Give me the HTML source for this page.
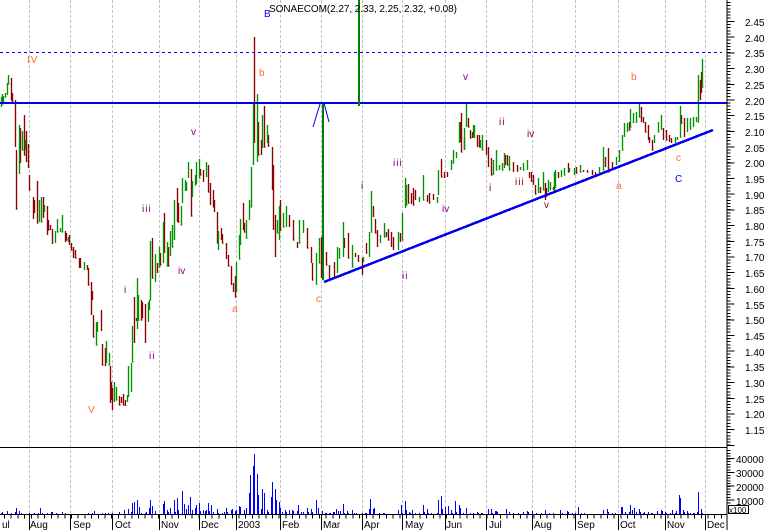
<!DOCTYPE html>
<html>
<head>
<meta charset="utf-8">
<style>
html,body{margin:0;padding:0;background:#fff;width:767px;height:530px;overflow:hidden}
svg{display:block}
text{font-family:"Liberation Sans",Arial,sans-serif;font-size:10px;fill:#000}
.o{fill:#ff6a28}.p{fill:#800080}.m{fill:#800000}.b{fill:#0000ee}
</style>
</head>
<body>
<svg width="767" height="530" viewBox="0 0 767 530" xmlns="http://www.w3.org/2000/svg">
<g shape-rendering="crispEdges" fill="none">
<!-- grid -->
<path stroke="#c0c0c0" stroke-dasharray="3 2" transform="translate(.5 0)" d="M29 0V514M70 0V514M112 0V514M159 0V514M199 0V514M236 0V514M280 0V514M321 0V514M362 0V514M402 0V514M445 0V514M486 0V514M532 0V514M575 0V514M618 0V514M665 0V514M705 0V514"/>
<!-- red bars -->
<path shape-rendering="auto" stroke-width="1.35" stroke="#8b0000" transform="translate(.5 0)" d="M11 78V100h1M12 93V102M15 100V147M16 150V209h1M20 128V163M24 115V155h1M26 131V162M28 144V168M29 175V190h1M33 197V219M34 200V213M37 181V223h1M43 197V218M47 206V235M48 220V230h1M50 225V230M52 229V244M65 231V242M66 233V240h1M69 235V245M71 243V250h1M73 247V258M75 250V258h1M79 258V268M80 258V268M87 265V270M88 268V285h1M91 282V315M92 291V300M93 315V337h1M101 310V331M102 344V365h1M105 348V366M110 366V403M111 382V400M112 388V410M119 396V405h1M121 397V403M123 394V405h1M125 400V406M134 297V343M136 318V321M141 300V320h1M142 302V318M145 304V343M152 238V278h1M157 263V273M160 253V265h1M164 213V253M168 247V266h1M177 188V222M178 203V222h1M191 169V216h1M200 169V175h1M203 170V182M208 165V192h1M210 183V205M213 190V207h1M214 200V212M217 212V243h1M221 228V240M222 234V243h1M226 243V259M228 255V266h1M231 266V285M233 283V292M235 276V297h1M243 203V230M244 223V232h1M254 37V143M258 122V155h1M261 140V155M264 106V147h1M268 135V147M272 147V190M273 165V230M275 215V257M280 200V230h1M289 215V227M293 220V240h1M297 242V248M307 228V248h1M311 247V263M312 263V280h1M321 237V278M326 252V265h1M329 265V280M334 262V277h1M344 238V248M348 233V258h1M355 253V257M358 255V262M362 258V275M366 243V253h1M373 206V217M375 219V233h1M377 230V247M386 232V237M388 229V240h1M391 232V247M393 237V250M400 233V242M408 184V203h1M411 193V204M413 188V205h1M415 190V200M427 195V202M429 193V203h1M433 194V200M441 159V177h1M444 172V178M447 172V177M460 122V142M461 113V152h1M464 137V150M468 118V127h1M470 130V138h1M472 132V138M477 135V147M479 135V147h1M486 140V155M488 147V167M491 158V175h1M505 155V165M507 155V165h1M513 162V172M517 165V171h1M529 172V178M531 172V182M533 175V185M535 185V194h1M540 187V193M545 183V200M546 188V197M553 187V190M558 172V178M568 163V172h1M576 167V173h1M583 170V172M587 170V172h1M592 170V175M595 172V175h1M605 157V167M608 148V172h1M612 162V170M629 122V130h1M641 107V122M643 117V123M645 122V132h1M648 125V140M649 137V143M652 140V150h1M663 128V140M666 130V140h1M669 135V142M671 138V143M681 115V123h1M684 118V137M701 72V93M700 80V100"/>
<!-- green bars -->
<path shape-rendering="auto" stroke-width="1.35" stroke="#009000" transform="translate(.5 0)" d="M1 97V107M2 94V104h1M3 96V102M5 93V97h1M7 83V95M8 75V84h1M19 125V174M22 131V150h1M25 140V150M39 200V222M41 197V222h1M44 205V212M55 231V243M57 219V232h1M60 228V232M62 215V232h-1M68 237V242M84 262V270M96 322V345h1M97 322V332M106 341V363M109 353V365h-1M114 382V402M116 387V400h1M127 395V402M128 366V397M131 363V392M132 326V362h1M137 278V329M138 295V320h1M148 302V322M149 300V310M150 241V300h-1M155 254V282M159 247V267h1M163 222V263M167 242V266h-1M170 231V256M172 225V247h1M174 200V240M181 206V225h-1M182 178V203M185 180V191M186 182V190h1M188 162V178M192 181V197M195 175V185h1M196 162V184M199 159V178h1M206 162V177M218 231V250M236 262V292M239 235V259h1M240 219V245M246 220V238h1M249 200V220M251 167V207h-1M253 103V165M257 94V162M262 115V147h1M267 125V143M277 220V233h1M279 206V240M283 213V227h1M286 206V227M299 220V243h1M303 220V233M316 253V285M319 238V263h1M337 247V273M339 248V258h1M343 222V257M352 245V267h1M363 257V262M369 232V257M371 191V232h1M380 235V243M384 223V237h1M398 232V250M402 213V240h1M405 178V208M406 185V205h1M419 197V202M423 175V200h1M438 170V195M437 197V203M451 160V170M453 150V163h-1M456 152V158M459 122V143M464 128V150M466 103V127M473 125V137h1M474 125V138M480 140V148M482 135V150h1M493 160V175M496 150V170h1M499 165V170M502 163V170h1M504 153V168M509 156V170h1M520 167V170M523 163V170h1M527 160V170M538 178V193M543 172V190h1M548 180V192M550 182V190M554 172V190h1M555 170V188M561 170V177M564 168V175h1M569 168V172M574 168V175M580 165V172h1M599 167V173M603 147V170h1M616 157V165M619 150V162M622 135V150h1M624 123V137M627 123V132M630 109V127h1M633 113V123M636 112V123M639 104V117h1M654 135V143M658 122V132h1M661 115V130M675 137V143M677 137V140M680 106V137h1M687 118V132M690 118V130M693 117V127M696 117V122M698 75V122h-1M702 59V87h1"/>
<!-- reference lines -->
<path stroke="#0000ee" stroke-dasharray="3 3" d="M0 52.5H722"/>
<path stroke="#0000ee" stroke-width="2" d="M0 103H727"/>
<path stroke="#0000ee" stroke-width="2.5" d="M324 282L713 130"/>
<path stroke="#008000" stroke-width="2" d="M323 104V280M359 0V106"/>
<!-- axes -->
<path stroke="#000" d="M0 447.5H727M0 514.5H727M727 0V514M727 447V530"/>
<path stroke="#000" stroke-width="3" stroke-dasharray="1 2.14" d="M729 2V447"/>
<path stroke="#000" stroke-width="7" stroke-dasharray="1 14.7" d="M731 21V447"/>
<path stroke="#000" stroke-width="3" stroke-dasharray="1 1.76" d="M729 450V505"/>
<path stroke="#000" stroke-width="7" stroke-dasharray="1 12.8" d="M731 458V505"/>
<path stroke="#000" stroke-width="4" stroke-dasharray="1 5.7" d="M4 516.5H722"/>
<path stroke="#000" transform="translate(.5 0)" d="M29 514V530M70 514V530M112 514V530M159 514V530M199 514V530M236 514V530M280 514V530M321 514V530M362 514V530M402 514V530M445 514V530M486 514V530M532 514V530M575 514V530M618 514V530M665 514V530M705 514V530"/>
<!-- volume -->
<path stroke="#0000ff" transform="translate(.5 0)" d="M1 514v-1M2 514v-2M7 514v-3M11 514v-1M15 514v-2M16 514v-6M19 514v-3M21 514v-1M29 514v-1M34 514v-1M38 514v-1M40 514v-6M42 514v-1M47 514v-1M51 514v-2M52 514v-2M56 514v-1M62 514v-2M65 514v-1M88 514v-1M92 514v-1M94 514v-3M102 514v-1M105 514v-1M108 514v-1M112 514v-1M119 514v-2M124 514v-4M128 514v-5M131 514v-2M132 514v-11M134 514v-12M137 514v-14M139 514v-7M141 514v-1M145 514v-1M146 514v-2M149 514v-6M150 514v-14M152 514v-8M155 514v-3M163 514v-10M164 514v-13M167 514v-4M168 514v-2M170 514v-6M174 514v-14M175 514v-2M177 514v-16M178 514v-4M182 514v-23M184 514v-10M186 514v-5M188 514v-9M190 514v-17M192 514v-4M195 514v-6M196 514v-9M199 514v-11M200 514v-3M203 514v-4M205 514v-3M206 514v-4M208 514v-11M209 514v-3M211 514v-9M213 514v-2M217 514v-5M218 514v-1M222 514v-1M224 514v-2M226 514v-6M227 514v-2M231 514v-4M232 514v-5M235 514v-3M236 514v-4M239 514v-8M240 514v-7M244 514v-4M246 514v-6M249 514v-21M250 514v-39M253 514v-48M254 514v-60M257 514v-40M258 514v-19M261 514v-5M262 514v-25M264 514v-21M267 514v-4M268 514v-2M271 514v-17M272 514v-32M275 514v-25M276 514v-14M279 514v-12M280 514v-6M282 514v-2M285 514v-4M286 514v-2M289 514v-4M292 514v-4M293 514v-3M297 514v-3M298 514v-9M301 514v-2M303 514v-2M307 514v-6M308 514v-2M311 514v-5M312 514v-2M316 514v-14M318 514v-6M322 514v-3M325 514v-1M326 514v-1M329 514v-1M330 514v-1M333 514v-2M334 514v-2M336 514v-5M338 514v-3M340 514v-3M343 514v-10M344 514v-1M347 514v-3M348 514v-1M352 514v-4M354 514v-1M356 514v-1M362 514v-1M365 514v-1M366 514v-1M369 514v-5M370 514v-15M373 514v-5M374 514v-6M379 514v-1M383 514v-1M384 514v-1M398 514v-4M401 514v-9M402 514v-1M405 514v-13M406 514v-4M409 514v-2M410 514v-1M412 514v-4M415 514v-1M419 514v-1M423 514v-9M424 514v-2M427 514v-5M428 514v-1M431 514v-1M437 514v-1M438 514v-14M441 514v-18M442 514v-5M445 514v-7M448 514v-8M451 514v-4M452 514v-1M455 514v-13M456 514v-2M459 514v-9M460 514v-6M463 514v-1M466 514v-6M470 514v-1M473 514v-1M477 514v-2M478 514v-1M481 514v-1M482 514v-1M488 514v-5M491 514v-5M492 514v-1M495 514v-3M496 514v-3M497 514v-2M506 514v-5M509 514v-2M513 514v-1M518 514v-1M523 514v-2M527 514v-3M528 514v-2M532 514v-3M536 514v-1M541 514v-1M545 514v-4M549 514v-1M553 514v-1M560 514v-4M562 514v-1M567 514v-3M568 514v-2M572 514v-1M575 514v-1M578 514v-7M581 514v-1M584 514v-1M603 514v-4M607 514v-5M608 514v-2M603 514v-4M607 514v-4M612 514v-1M615 514v-1M621 514v-7M622 514v-7M625 514v-2M629 514v-2M630 514v-9M632 514v-4M634 514v-6M636 514v-2M639 514v-5M640 514v-2M643 514v-1M644 514v-2M648 514v-2M651 514v-1M652 514v-1M657 514v-3M661 514v-4M662 514v-3M665 514v-2M666 514v-1M670 514v-1M672 514v-4M675 514v-1M676 514v-3M679 514v-19M680 514v-16M683 514v-4M684 514v-2M687 514v-3M688 514v-1M690 514v-1M693 514v-1M694 514v-1M697 514v-2M698 514v-22M701 514v-5M702 514v-1"/>
<!-- arrow -->
<path stroke="#0000ee" d="M313 127L320 104L322 103M324 103L329 122" shape-rendering="auto"/>
<!-- x100 box -->
<rect x="728.5" y="505.5" width="20" height="8" fill="#fff" stroke="#000"/>
</g>

<!-- title -->
<text x="269" y="12" textLength="188" lengthAdjust="spacing">SONAECOM(2.27, 2.33, 2.25, 2.32, +0.08)</text>

<!-- price labels -->
<g>
<text x="745" y="26">2.45</text><text x="745" y="42">2.40</text><text x="745" y="57">2.35</text><text x="745" y="73">2.30</text><text x="745" y="89">2.25</text><text x="745" y="105">2.20</text><text x="745" y="120">2.15</text><text x="745" y="136">2.10</text><text x="745" y="152">2.05</text><text x="745" y="167">2.00</text><text x="745" y="183">1.95</text><text x="745" y="199">1.90</text><text x="745" y="214">1.85</text><text x="745" y="230">1.80</text><text x="745" y="246">1.75</text><text x="745" y="261">1.70</text><text x="745" y="277">1.65</text><text x="745" y="293">1.60</text><text x="745" y="309">1.55</text><text x="745" y="324">1.50</text><text x="745" y="340">1.45</text><text x="745" y="356">1.40</text><text x="745" y="371">1.35</text><text x="745" y="387">1.30</text><text x="745" y="403">1.25</text><text x="745" y="418">1.20</text><text x="745" y="434">1.15</text>
</g>
<!-- volume labels -->
<text x="736" y="463">40000</text><text x="736" y="477">30000</text><text x="736" y="491">20000</text><text x="736" y="505">10000</text>
<text x="729" y="513" style="font-size:8px">x100</text>

<!-- month labels -->
<text x="2" y="528">ul</text><text x="30" y="528">Aug</text><text x="73" y="528">Sep</text><text x="115" y="528">Oct</text><text x="161" y="528">Nov</text><text x="201" y="528">Dec</text><text x="238" y="528">2003</text><text x="282" y="528">Feb</text><text x="323" y="528">Mar</text><text x="364" y="528">Apr</text><text x="405" y="528">May</text><text x="446" y="528">Jun</text><text x="489" y="528">Jul</text><text x="534" y="528">Aug</text><text x="577" y="528">Sep</text><text x="620" y="528">Oct</text><text x="667" y="528">Nov</text><text x="707" y="528">Dec</text>

<!-- wave labels -->
<text class="o" x="27" y="63" letter-spacing="1">IV</text>
<text class="o" x="88" y="413">V</text>
<text class="o" x="232" y="312">a</text>
<text class="o" x="259" y="76">b</text>
<text class="o" x="316" y="302">c</text>
<text class="o" x="616" y="189">a</text>
<text class="o" x="631" y="80">b</text>
<text class="o" x="676" y="161">c</text>
<text class="b" x="264" y="17">B</text>
<text class="b" x="675" y="182">C</text>
<text class="p" x="191" y="135">v</text>
<text class="p" x="142" y="212" letter-spacing="1">iii</text>
<text class="p" x="124" y="293">i</text>
<text class="p" x="178" y="274">iv</text>
<text class="p" x="149" y="359" letter-spacing="1">ii</text>
<text class="p" x="361" y="189">i</text>
<text class="p" x="393" y="166" letter-spacing="1">iii</text>
<text class="p" x="402" y="279" letter-spacing="1">ii</text>
<text class="p" x="442" y="212">iv</text>
<text class="p" x="463" y="80">v</text>
<text class="m" x="499" y="125" letter-spacing="1">ii</text>
<text class="m" x="527" y="137">iv</text>
<text class="m" x="489" y="191">i</text>
<text class="m" x="515" y="185" letter-spacing="1">iii</text>
<text class="m" x="544" y="208">v</text>
</svg>
</body>
</html>
